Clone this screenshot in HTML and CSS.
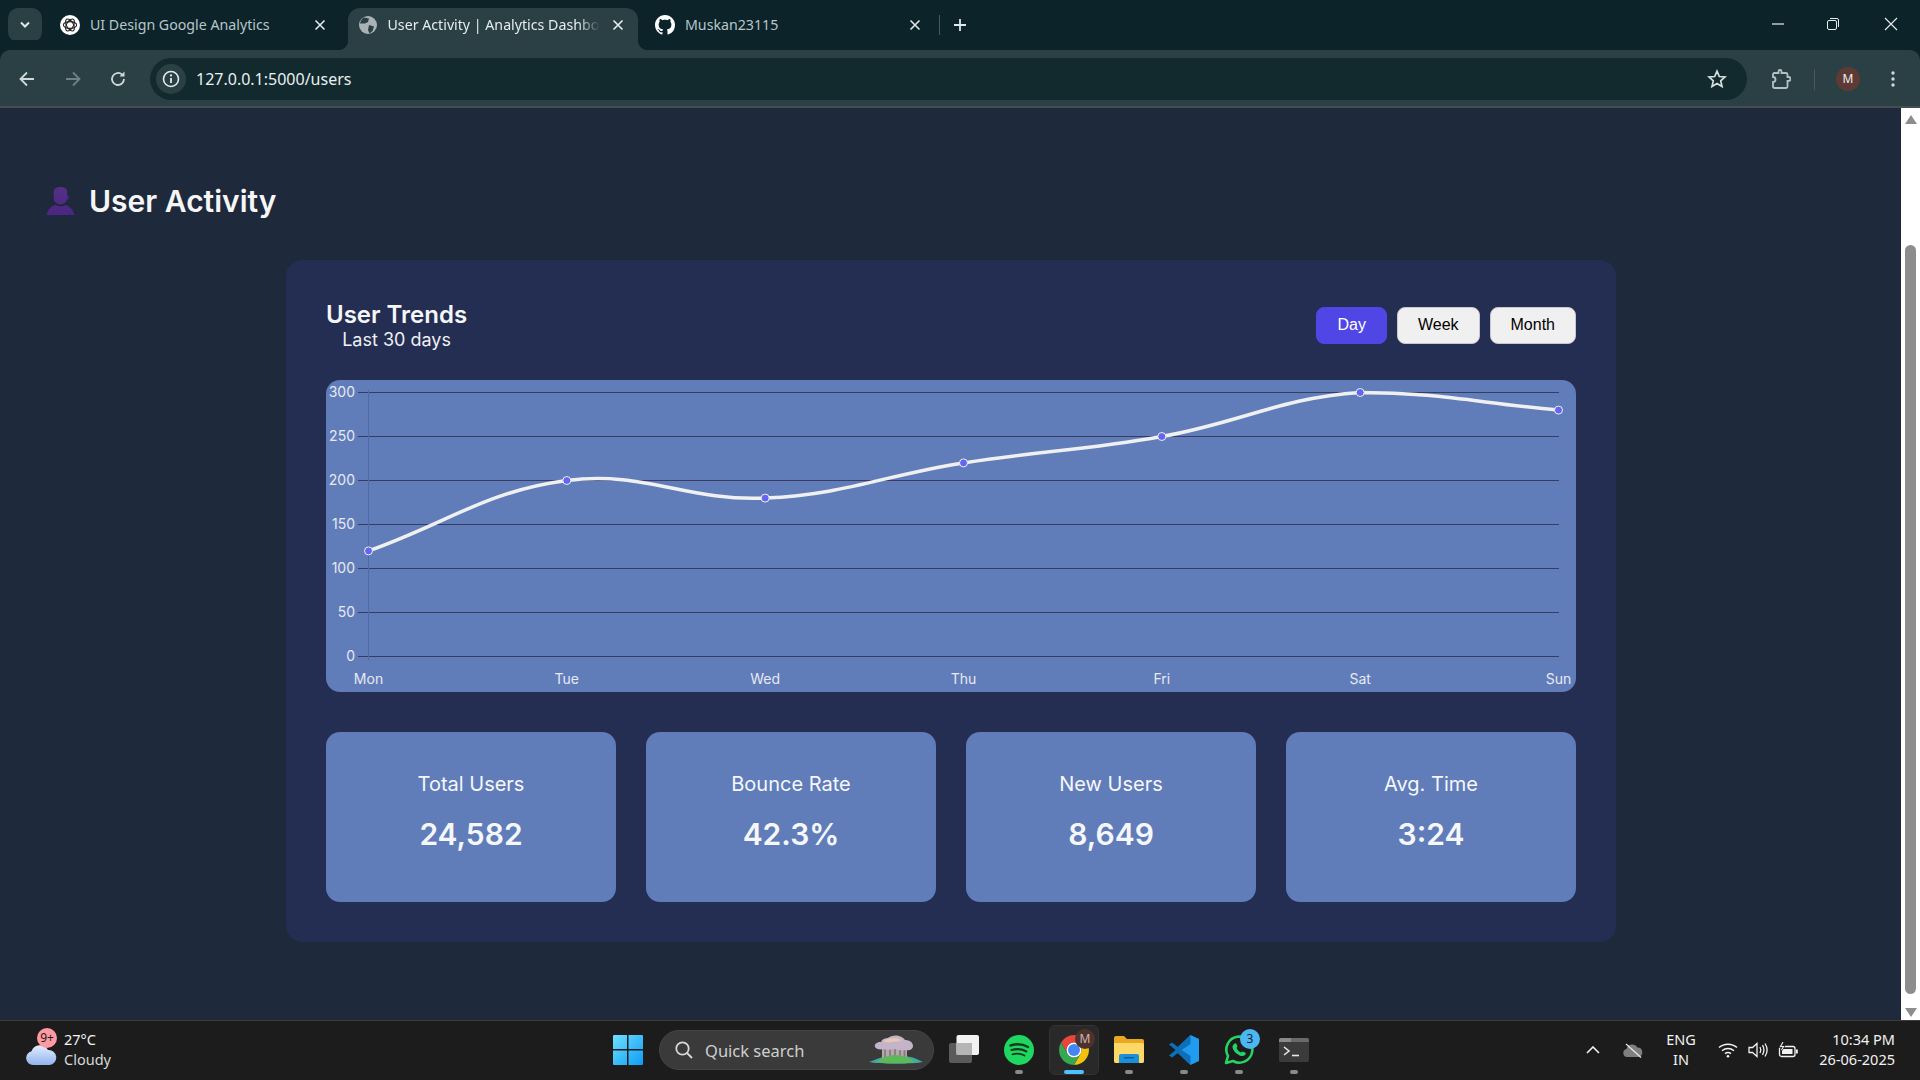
FILE: index.html
```html
<!DOCTYPE html>
<html lang="en">
<head>
<meta charset="utf-8">
<title>User Activity | Analytics Dashboard</title>
<link rel="stylesheet" href="styles.css">
</head>
<body>
<header class="tabstrip">
  <button class="tab-menu"><svg width="12" height="8" viewBox="0 0 12 8"><path d="M2 1.5l4 4 4-4" fill="none" stroke="#dfe7e8" stroke-width="2"/></svg></button>
  <div class="tab">
    <svg class="favicon" viewBox="0 0 20 20"><circle cx="10" cy="10" r="10" fill="#fff"/><g fill="none" stroke="#222" stroke-width="1.1"><ellipse cx="10" cy="10" rx="6.6" ry="3.4"/><ellipse cx="10" cy="10" rx="6.6" ry="3.4" transform="rotate(60 10 10)"/><ellipse cx="10" cy="10" rx="6.6" ry="3.4" transform="rotate(120 10 10)"/></g></svg>
    <span class="tab-title">UI Design Google Analytics</span>
    <svg class="tab-close" viewBox="0 0 12 12"><path d="M1.5 1.5l9 9M10.5 1.5l-9 9" stroke="#dfe7e8" stroke-width="1.6"/></svg>
  </div>
  <div class="tab tab-active">
    <svg class="favicon" viewBox="0 0 20 20"><circle cx="10" cy="10" r="9" fill="#a9b3b6"/><path d="M6 2.5l5 1-1 3.5-3 1.5L2 8.500c.5-2.500 2-4.800 4-6zM11 10l5 1.500-1.500 4.500-3 2.500-1.500-3.500z" fill="#2a4045"/></svg>
    <span class="tab-title tab-title-fade">User Activity | Analytics Dashboard</span>
    <svg class="tab-close" viewBox="0 0 12 12"><path d="M1.500 1.500l9 9M10.500 1.500l-9 9" stroke="#e8eeee" stroke-width="1.600"/></svg>
  </div>
  <div class="tab">
    <svg class="favicon" viewBox="0 0 16 16"><path fill="#fff" d="M8 0C3.58 0 0 3.58 0 8c0 3.540 2.290 6.530 5.470 7.590.4.070.55-.17.55-.38 0-.19-.01-.82-.01-1.490-2.010.37-2.530-.49-2.690-.94-.09-.23-.48-.94-.82-1.130-.28-.15-.68-.52-.01-.53.63-.01 1.080.58 1.230.82.72 1.210 1.870.87 2.330.66.07-.52.28-.87.51-1.070-1.780-.2-3.640-.89-3.640-3.950 0-.87.31-1.590.82-2.150-.08-.2-.36-1.020.08-2.120 0 0 .67-.21 2.200.82.64-.18 1.320-.27 2-.27.68 0 1.360.09 2 .27 1.530-1.040 2.200-.82 2.200-.82.44 1.100.16 1.920.08 2.120.51.56.82 1.270.82 2.150 0 3.070-1.870 3.750-3.650 3.950.29.25.54.73.54 1.480 0 1.070-.01 1.930-.01 2.200 0 .21.15.46.55.38A8.013 8.013 0 0016 8c0-4.420-3.580-8-8-8z"/></svg>
    <span class="tab-title">Muskan23115</span>
    <svg class="tab-close" viewBox="0 0 12 12"><path d="M1.500 1.500l9 9M10.500 1.500l-9 9" stroke="#dfe7e8" stroke-width="1.600"/></svg>
  </div>
  <span class="tab-sep"></span>
  <svg class="tab-new" viewBox="0 0 14 14"><path d="M7 1v12M1 7h12" stroke="#dfe7e8" stroke-width="1.800"/></svg>
  <div class="window-controls">
    <svg viewBox="0 0 14 14"><path d="M1 7h12" stroke="#e8eeee" stroke-width="1.200"/></svg>
    <svg viewBox="0 0 14 14"><rect x="1.500" y="3.500" width="9" height="9" rx="1.500" fill="none" stroke="#e8eeee"/><path d="M4 1.500h7a1.500 1.500 0 0 1 1.500 1.500v7" fill="none" stroke="#e8eeee"/></svg>
    <svg viewBox="0 0 14 14"><path d="M1 1l12 12M13 1L1 13" stroke="#e8eeee" stroke-width="1.100"/></svg>
  </div>
</header>

<nav class="toolbar">
  <svg class="tool tool-back" viewBox="0 0 18 18"><path d="M16 9H3M9 2.500L2.500 9 9 15.500" fill="none" stroke="#cfd9db" stroke-width="1.800"/></svg>
  <svg class="tool tool-forward" viewBox="0 0 18 18"><path d="M2 9h13M9 2.500L15.500 9 9 15.500" fill="none" stroke="#6f8286" stroke-width="1.800"/></svg>
  <svg class="tool tool-reload" viewBox="0 0 18 18"><path d="M15 9a6 6 0 1 1-1.900-4.400" fill="none" stroke="#cfd9db" stroke-width="1.800"/><path d="M15.500 1.500v5h-5z" fill="#cfd9db"/></svg>
  <div class="omnibox">
    <span class="site-info"><svg width="20" height="20" viewBox="0 0 20 20"><circle cx="10" cy="10" r="7.500" fill="none" stroke="#e3ebec" stroke-width="1.600"/><path d="M10 9v5" stroke="#e3ebec" stroke-width="1.800"/><circle cx="10" cy="6.400" r="1.100" fill="#e3ebec"/></svg></span>
    <span class="url">127.0.0.1:5000/users</span>
    <svg class="star" viewBox="0 0 20 20"><path d="M10 2.200l2.300 5.300 5.700.5-4.300 3.800 1.300 5.600-5-3-5 3 1.300-5.600L2 8l5.700-.5z" fill="none" stroke="#d5dfe0" stroke-width="1.700"/></svg>
  </div>
  <svg class="tool-ext" viewBox="0 0 20 22"><path d="M3 5h4.500V3.500a1.500 1.500 0 0 1 3 0V5H15a1.500 1.500 0 0 1 1.500 1.500V9h1a2 2 0 0 1 0 4h-1v5.500A1.500 1.500 0 0 1 15 20H3.500A1.500 1.500 0 0 1 2 18.500V14a2.500 2.500 0 0 0 0-5V6z" fill="none" stroke="#b3c1c4" stroke-width="1.800"/></svg>
  <span class="tool-sep"></span>
  <span class="avatar">M</span>
  <svg class="tool-menu" viewBox="0 0 4 18"><circle cx="2" cy="3" r="1.700" fill="#cfd9db"/><circle cx="2" cy="9" r="1.700" fill="#cfd9db"/><circle cx="2" cy="15" r="1.700" fill="#cfd9db"/></svg>
</nav>

<div class="viewport">
  <main class="page">
    <h1 class="page-title">
      <svg class="title-icon" viewBox="0 0 30 30"><defs><linearGradient id="pu" x1="0" y1="0" x2="0" y2="1"><stop offset="0" stop-color="#553085"/><stop offset="1" stop-color="#4a2683"/></linearGradient></defs><path d="M8 5c0-3 3-5 7-5s7 2 7 5v7c0 3-3 6-7 6s-7-3-7-6zM10 18.500c3 2 7 2 10 0 5 1 8 5 9.500 10.500H.500C2 23.500 5 19.500 10 18.500z" fill="url(#pu)"/><rect x="21.500" y="9" width="2" height="4" rx="1" fill="#4a2683"/></svg>
      User Activity
    </h1>
    <section class="panel">
      <div class="panel-head">
        <div class="panel-titles">
          <h2>User Trends</h2>
          <p>Last 30 days</p>
        </div>
        <div class="range">
          <button class="range-btn range-btn-on">Day</button>
          <button class="range-btn">Week</button>
          <button class="range-btn">Month</button>
        </div>
      </div>
      <div class="chart">
        <svg width="1250" height="312" viewBox="0 0 1250 312">
          <g class="grid">
            <line x1="32" x2="1233" y1="12.5" y2="12.5"/>
            <line x1="32" x2="1233" y1="56.5" y2="56.5"/>
            <line x1="32" x2="1233" y1="100.5" y2="100.5"/>
            <line x1="32" x2="1233" y1="144.5" y2="144.5"/>
            <line x1="32" x2="1233" y1="188.5" y2="188.5"/>
            <line x1="32" x2="1233" y1="232.5" y2="232.5"/>
            <line x1="32" x2="1233" y1="276.5" y2="276.5"/>
          </g>
          <line class="axis" x1="42.5" x2="42.5" y1="10" y2="280"/>
          <g class="y-labels">
            <text x="29" y="17">300</text>
            <text x="29" y="61">250</text>
            <text x="29" y="105">200</text>
            <text x="29" y="149">150</text>
            <text x="29" y="193">100</text>
            <text x="29" y="237">50</text>
            <text x="29" y="281">0</text>
          </g>
          <g class="x-labels">
            <text x="42.5" y="304">Mon</text>
            <text x="240.8" y="304">Tue</text>
            <text x="439.2" y="304">Wed</text>
            <text x="637.5" y="304">Thu</text>
            <text x="835.8" y="304">Fri</text>
            <text x="1034.2" y="304">Sat</text>
            <text x="1232.5" y="304">Sun</text>
          </g>
          <path class="trend" d="M42.5 170.9C121.83 142.74 159.3 111.35 240.83 100.5C317.98 90.23 360.3 121.6 439.17 118.1C518.97 114.56 557.9 95.26 637.5 82.9C716.56 70.62 757.1 70.47 835.83 56.5C915.76 42.31 954.04 17.83 1034.17 12.5C1112.71 12.5 1153.17 23.06 1232.5 30.1"/>
          <g class="points">
            <circle cx="42.5" cy="170.9" r="4"/>
            <circle cx="240.83" cy="100.5" r="4"/>
            <circle cx="439.17" cy="118.1" r="4"/>
            <circle cx="637.5" cy="82.9" r="4"/>
            <circle cx="835.83" cy="56.5" r="4"/>
            <circle cx="1034.17" cy="12.5" r="4"/>
            <circle cx="1232.5" cy="30.1" r="4"/>
          </g>
        </svg>
      </div>
      <div class="stats">
        <div class="stat"><span class="stat-label">Total Users</span><strong class="stat-value">24,582</strong></div>
        <div class="stat"><span class="stat-label">Bounce Rate</span><strong class="stat-value">42.3%</strong></div>
        <div class="stat"><span class="stat-label">New Users</span><strong class="stat-value">8,649</strong></div>
        <div class="stat"><span class="stat-label">Avg. Time</span><strong class="stat-value">3:24</strong></div>
      </div>
    </section>
  </main>
  <aside class="scrollbar">
    <span class="arrow-up"></span>
    <span class="thumb"></span>
    <span class="arrow-down"></span>
  </aside>
</div>

<footer class="taskbar">
  <div class="weather">
    <span class="weather-icon">
      <svg width="32" height="24" viewBox="0 0 32 24"><defs><linearGradient id="cl" x1="0" y1="0" x2="0" y2="1"><stop offset="0" stop-color="#e6eefc"/><stop offset="1" stop-color="#8fb2ee"/></linearGradient></defs><path d="M8 23a7 7 0 0 1-1.500-13.800A9 9 0 0 1 23 8a7.500 7.500 0 0 1 1.500 15z" fill="url(#cl)"/></svg>
      <span class="weather-badge">9+</span>
    </span>
    <span class="weather-text"><span class="weather-temp">27°C</span><span>Cloudy</span></span>
  </div>
  <svg class="start" viewBox="0 0 30 30"><defs><linearGradient id="wn" x1="0" y1="0" x2="1" y2="1"><stop offset="0" stop-color="#6fe0ff"/><stop offset="1" stop-color="#0d9cf5"/></linearGradient></defs><path d="M0 1a1 1 0 0 1 1-1h13v14H0zM15.500 0H29a1 1 0 0 1 1 1v13H15.500zM0 15.500h14V30H1a1 1 0 0 1-1-1zM15.500 15.500H30V29a1 1 0 0 1-1 1H15.500z" fill="url(#wn)"/></svg>
  <div class="search">
    <svg class="search-icon" viewBox="0 0 18 18"><circle cx="7.500" cy="7.500" r="6.200" fill="none" stroke="#d8d8d8" stroke-width="1.800"/><path d="M12 12l5 5" stroke="#d8d8d8" stroke-width="1.800"/></svg>
    <span class="search-text">Quick search</span>
    <svg class="search-art" viewBox="0 0 54 30">
      <path d="M0 27c8-3 12-5 20-6h16c8 1 12 3 18 6-8 2-46 2-54 0z" fill="#3fa8a8"/>
      <rect x="13" y="12" width="25" height="11" fill="#b5a8a6"/>
      <path d="M16 12v11M21 12v11M26 12v11M31 12v11M35.500 12v11" stroke="#857a84" stroke-width="1.700"/>
      <path d="M8 27c5-5 12-7 20-7 8 1 13 3 18 7-12 2-26 2-38 0z" fill="#5db85a"/>
      <path d="M6 12c-1-3 2-5 6-5 1-3 4-4 7-4 2-2 7-3 11-2 3 1 5 2 6 4 4 0 8 2 8 6 0 3-3 5-7 4-4 1-8 0-11-1-4 1-9 1-12 0-3 1-7 0-8-2z" fill="#c3b4ca"/>
      <path d="M14 6c3-3 13-4 19-1-2 2-6 1-9 2-3 0-7 1-10-1z" fill="#e6c9b0"/>
    </svg>
  </div>
  <div class="apps">
    <span class="app"><svg class="app-icon" viewBox="0 0 30 30"><rect x="0" y="8" width="23" height="20" rx="2" fill="#5a5a5a"/><rect x="7.500" y="0" width="22.500" height="20" rx="2" fill="#f2f2f2"/><rect x="7.500" y="8" width="15.500" height="12" fill="#b5b5b5"/></svg></span>
    <span class="app app-open"><svg class="app-icon" viewBox="0 0 30 30"><circle cx="15" cy="15" r="15" fill="#1ed760"/><g fill="none" stroke="#15391f" stroke-linecap="round"><path d="M6.500 10.500c6-1.800 12.500-1.300 17.500 1.500" stroke-width="2.500"/><path d="M7.500 15c5-1.400 10.500-1 14.800 1.400" stroke-width="2.200"/><path d="M8.500 19.300c4.300-1 8.500-.7 12 1.200" stroke-width="1.800"/></g></svg></span>
    <span class="app app-active"><svg class="app-icon" viewBox="0 0 30 30"><path d="M27.990 7.500A15 15 0 0 0 2.010 7.500L8.500 18.750A7.500 7.500 0 0 1 15 7.500z" fill="#e8453c"/><path d="M27.990 7.500A15 15 0 0 1 15 30L21.500 18.750A7.500 7.500 0 0 0 15 7.500z" fill="#f4c20d"/><path d="M2.010 7.500A15 15 0 0 0 15 30L21.500 18.750A7.500 7.500 0 0 1 8.500 18.750z" fill="#34a853"/><circle cx="15" cy="15" r="7.500" fill="#fff"/><circle cx="15" cy="15" r="6" fill="#4285f4"/></svg><span class="app-badge app-badge-m">M</span></span>
    <span class="app app-open"><svg class="app-icon" viewBox="0 0 30 30"><path d="M0 3a2 2 0 0 1 2-2h8l3 3h15a2 2 0 0 1 2 2v20a2 2 0 0 1-2 2H2a2 2 0 0 1-2-2z" fill="#e9a820"/><path d="M0 8h28a2 2 0 0 1 2 2v16a2 2 0 0 1-2 2H2a2 2 0 0 1-2-2z" fill="#fcd868"/><path d="M5 21a2 2 0 0 1 2-2h16a2 2 0 0 1 2 2v7H5z" fill="#1b8fd8"/><rect x="10" y="22" width="10" height="1.500" fill="#0c5f9e"/></svg></span>
    <span class="app app-open"><svg class="app-icon" viewBox="0 0 30 30"><path d="M21.500 0L30 4v22l-8.500 4L9 18V12z" fill="#1f9cf0"/><path d="M21.500 0L9 12 3 7.500 0 9.500 6.500 15 0 20.500l3 2L9 18l12.500 12V21L12.500 15 21.500 9z" fill="#0c6fb8"/></svg></span>
    <span class="app app-open"><svg class="app-icon" viewBox="0 0 30 30"><path d="M2 28l2-7A13 13 0 1 1 9 26z" fill="none" stroke="#25d366" stroke-width="2.600" stroke-linejoin="round"/><path d="M10 9c1-1 2-1 2.500 0l1 2.500-1 1.500c1 2 2.500 3.500 4.500 4.500l1.500-1 2.500 1c1 .5 1 1.500 0 2.500-1.500 1.500-4 1.500-7-.5s-5-4.500-5.500-7c-.2-1.200.5-2.500 1.500-3.500z" fill="#25d366"/></svg><span class="app-badge app-badge-n">3</span></span>
    <span class="app app-open"><svg class="app-icon app-term" viewBox="0 0 30 24"><rect width="30" height="24" rx="2" fill="#3b3b3b"/><path d="M0 2a2 2 0 0 1 2-2h10v4H0z" fill="#8a8a8a"/><path d="M12 0h16a2 2 0 0 1 2 2v2H12z" fill="#6a6a6a"/><path d="M5 9l5 4-5 4" fill="none" stroke="#e8e8e8" stroke-width="1.600"/><path d="M13 17.500h7" stroke="#e8e8e8" stroke-width="1.600"/></svg></span>
  </div>
  <div class="tray">
    <svg class="tray-chevron" viewBox="0 0 14 8"><path d="M1 7l6-6 6 6" fill="none" stroke="#f2f2f2" stroke-width="1.600"/></svg>
    <svg class="tray-cloud" viewBox="0 0 20 15"><path d="M4 14a4 4 0 0 1-.5-7.900A6 6 0 0 1 14.500 4.500 4.800 4.800 0 0 1 15.500 14z" fill="#7f7f7f"/><path d="M3 1l15 13.500" stroke="#e6e6e6" stroke-width="1.300"/></svg>
    <span class="tray-lang"><span>ENG</span><span>IN</span></span>
    <svg class="tray-wifi" viewBox="0 0 20 16"><g fill="none" stroke="#f2f2f2" stroke-width="1.500"><path d="M1 5.500c5-4.500 13-4.500 18 0"/><path d="M4 8.700c3.500-3 8.500-3 12 0"/><path d="M7 11.700c1.800-1.500 4.200-1.500 6 0"/></g><circle cx="10" cy="14.300" r="1.300" fill="#f2f2f2"/></svg>
    <svg class="tray-vol" viewBox="0 0 20 16"><path d="M1 5.500h3.500L9 1.500v13l-4.500-4H1z" fill="none" stroke="#f2f2f2" stroke-width="1.300"/><g fill="none" stroke="#f2f2f2" stroke-width="1.300"><path d="M12 5c1 1.800 1 4.200 0 6"/><path d="M14.500 3.200c1.800 3 1.800 6.600 0 9.600"/><path d="M17 1.500c2.600 4 2.600 9 0 13"/></g></svg>
    <svg class="tray-bat" viewBox="0 0 20 16"><rect x="1.500" y="4.500" width="15.500" height="10" rx="2" fill="none" stroke="#f2f2f2" stroke-width="1.300"/><rect x="4" y="7" width="10.500" height="5" fill="#f2f2f2"/><rect x="18" y="7.500" width="1.800" height="4" fill="#f2f2f2"/><path d="M5 0L2.500 4.500h3L3.500 8" fill="none" stroke="#1c1c1c" stroke-width="2.500"/><path d="M5 0L2.500 4.500h3L3.500 8" fill="none" stroke="#f2f2f2" stroke-width="1.100"/></svg>
    <span class="tray-clock"><span>10:34 PM</span><span>26-06-2025</span></span>
  </div>
</footer>
</body>
</html>
```
FILE: styles.css
```css
* { box-sizing: border-box; }
html, body { margin: 0; height: 100%; }
body {
  width: 1920px;
  height: 1080px;
  overflow: hidden;
  display: flex;
  flex-direction: column;
  font-family: Inter, "Liberation Sans", sans-serif;
  background: #1e293b;
}

/* browser tabs */
.tabstrip {
  height: 50px;
  flex: none;
  display: flex;
  align-items: flex-start;
  background: #0b2329;
  font-family: "Noto Sans", "Open Sans", sans-serif;
  font-size: 14.2px;
  color: #b9c6c9;
}
.tab-menu {
  width: 34px;
  height: 34px;
  margin: 8px 8px 0 8px;
  padding: 0;
  border: 0;
  border-radius: 10px;
  background: #2a4045;
  display: flex;
  align-items: center;
  justify-content: center;
}
.tab {
  position: relative;
  width: 290px;
  height: 42px;
  margin-top: 8px;
  margin-right: 7.5px;
  padding: 0 12px 9px 10px;
  display: flex;
  align-items: center;
  border-radius: 12px 12px 0 0;
}
.tab-active { background: #2a4045; color: #e4ecee; }
.tab-active::before, .tab-active::after {
  content: "";
  position: absolute;
  bottom: 0;
  width: 10px;
  height: 10px;
}
.tab-active::before { left: -10px; background: radial-gradient(circle at 0 0, transparent 10px, #2a4045 10.5px); }
.tab-active::after { right: -10px; background: radial-gradient(circle at 100% 0, transparent 10px, #2a4045 10.5px); }
.favicon { width: 20px; height: 20px; flex: none; }
.tab-title { flex: 1; margin-left: 10px; white-space: nowrap; overflow: hidden; }
.tab-title-fade { -webkit-mask-image: linear-gradient(90deg, #000 88%, transparent 98%); mask-image: linear-gradient(90deg, #000 88%, transparent 98%); }
.tab-close { width: 12px; height: 12px; flex: none; margin-left: 8px; margin-right: 2px; }
.tab-sep { width: 1px; height: 20px; margin: 15px 0 0 -3.5px; background: #45585c; }
.tab-new { width: 14px; height: 14px; margin: 18px 0 0 13px; }
.window-controls {
  margin-left: auto;
  display: flex;
  gap: 44px;
  padding: 17px 22px 0 0;
}
.window-controls svg { width: 14px; height: 14px; }
.window-controls svg:first-child { margin-right: -3px; }

/* browser toolbar */
.toolbar {
  height: 58px;
  flex: none;
  display: flex;
  align-items: center;
  padding-top: 2px;
  background: #2a4045;
  border-bottom: 2px solid #454d50;
  border-radius: 10px 10px 0 0;
  box-shadow: 0 -10px 0 0 #0b2329;
}
.tool { width: 18px; height: 18px; flex: none; }
.tool-back { margin-left: 18px; }
.tool-forward { margin-left: 28px; }
.tool-reload { margin-left: 27px; }
.omnibox {
  width: 1597px;
  height: 42px;
  margin-left: 23px;
  padding: 0 20px 0 6px;
  display: flex;
  align-items: center;
  border-radius: 21px;
  background: #12292e;
}
.site-info {
  width: 30px;
  height: 30px;
  display: flex;
  align-items: center;
  justify-content: center;
  border-radius: 50%;
  background: #2a4045;
}
.url {
  margin-left: 10px;
  font-family: "Noto Sans", "Open Sans", sans-serif;
  font-size: 16px;
  color: #e8f0f1;
}
.star { width: 20px; height: 20px; margin-left: auto; }
.tool-ext { width: 20px; height: 22px; margin-left: 24px; }
.tool-sep { width: 1px; height: 21px; margin-left: 23px; background: #45585c; }
.avatar {
  width: 24px;
  height: 24px;
  margin-left: 21px;
  border-radius: 50%;
  background: #5d3a34;
  color: #eee;
  font-family: "Noto Sans", sans-serif;
  font-size: 12px;
  line-height: 24px;
  text-align: center;
}
.tool-menu { width: 4px; height: 18px; margin-left: 31px; }

/* page */
.viewport { flex: 1; min-height: 0; display: flex; }
.page { flex: 1; min-width: 0; background: #1e293b; color: #f5f6f8; }
.page-title {
  height: 50px;
  margin: 68px 0 34px 46px;
  display: flex;
  align-items: center;
  gap: 14px;
  font-size: 30px;
  font-weight: 600;
  line-height: 50px;
}
.title-icon { width: 29px; height: 29px; flex: none; }
.panel {
  width: 1330px;
  height: 682px;
  margin-left: 286px;
  padding: 40px;
  border-radius: 16px;
  background: #242d52;
}
.panel-head {
  height: 51px;
  margin-bottom: 29px;
  display: flex;
  align-items: center;
  justify-content: space-between;
}
.panel-titles { text-align: center; }
.panel-titles h2 { margin: 0; font-size: 24px; font-weight: 600; line-height: 29px; }
.panel-titles p { margin: 0; font-size: 18px; line-height: 22px; color: #eef0f4; }
.range { display: flex; gap: 10px; margin-top: -1px; }
.range-btn {
  height: 37px;
  padding: 0 20px;
  border: 1px solid #c8c8ce;
  border-radius: 8px;
  background: #f0f0f0;
  color: #000;
  font-family: "Liberation Sans", Arial, sans-serif;
  font-size: 16px;
}
.range-btn-on { background: #4f46e5; border-color: #4f46e5; color: #fff; }

.chart { height: 312px; border-radius: 14px; background: #607dba; overflow: hidden; }
.chart svg { display: block; }
.grid line { stroke: #383b62; stroke-width: 1; }
.axis { stroke: #506ba3; stroke-width: 1; }
.y-labels text, .x-labels text { font-family: Inter, sans-serif; font-size: 14px; fill: #e7e9f2; }
.y-labels text { text-anchor: end; }
.x-labels text { text-anchor: middle; }
.trend { fill: none; stroke: #f0f0f0; stroke-width: 3.5; }
.points circle { fill: #6366f1; stroke: #f0f0f0; stroke-width: 1; }

.stats { margin-top: 40px; display: grid; grid-template-columns: repeat(4, 1fr); gap: 30px; }
.stat {
  height: 170px;
  padding-top: 40px;
  display: flex;
  flex-direction: column;
  align-items: center;
  border-radius: 14px;
  background: #607dba;
}
.stat-label { font-size: 20px; line-height: 24px; color: #f6f7fa; }
.stat-value { margin-top: 20px; font-size: 30px; font-weight: 600; line-height: 36px; color: #f6f7fa; }

/* scrollbar */
.scrollbar {
  width: 19px;
  flex: none;
  display: flex;
  flex-direction: column;
  align-items: center;
  background: #fff;
  padding-top: 7px;
}
.arrow-up, .arrow-down { width: 0; height: 0; border-left: 6px solid transparent; border-right: 6px solid transparent; }
.arrow-up { border-bottom: 9px solid #8d8d8d; }
.arrow-down { border-top: 9px solid #8d8d8d; margin-top: 14px; }
.thumb { width: 11px; height: 749px; margin-top: 121px; border-radius: 6px; background: #8d8d8d; }

/* taskbar */
.taskbar {
  height: 60px;
  flex: none;
  position: relative;
  display: flex;
  align-items: center;
  padding-bottom: 1px;
  border-top: 1px solid #3c3c3c;
  background: #1c1c1c;
  font-family: "Noto Sans", "Open Sans", sans-serif;
  font-size: 14.5px;
  color: #f2f2f2;
}
.weather { width: 613px; padding-left: 25px; display: flex; align-items: center; }
.weather-icon { position: relative; width: 32px; height: 24px; margin-top: 8px; }
.weather-badge {
  position: absolute;
  left: 12px;
  top: -14px;
  width: 20px;
  height: 20px;
  border-radius: 50%;
  background: #ff9aa2;
  color: #1a1a1a;
  font-size: 12px;
  line-height: 20px;
  text-align: center;
}
.weather-text { margin: -2px 0 0 7px; display: flex; flex-direction: column; line-height: 20px; color: #d8d8d8; }
.weather-temp { color: #f2f2f2; }
.start { width: 30px; height: 30px; flex: none; }
.search {
  width: 275px;
  height: 40px;
  margin-left: 16px;
  padding: 0 10px 0 15px;
  flex: none;
  display: flex;
  align-items: center;
  border-radius: 20px;
  border: 1px solid #454545;
  background: #3a3a3a;
}
.search-icon { width: 18px; height: 18px; flex: none; }
.search-text { margin-left: 12px; font-size: 16.5px; color: #cfcfcf; }
.search-art { width: 54px; height: 30px; margin-left: auto; }
.apps { margin-left: 5px; display: flex; gap: 5px; }
.app {
  position: relative;
  width: 50px;
  height: 50px;
  display: flex;
  align-items: center;
  justify-content: center;
  border: 1px solid transparent;
  border-radius: 6px;
}
.app-icon { width: 30px; height: 30px; }
.app-term { height: 24px; }
.app-open::after, .app-active::after {
  content: "";
  position: absolute;
  left: 50%;
  bottom: 0;
  width: 8px;
  height: 4px;
  margin-left: -4px;
  border-radius: 2px;
  background: #8a8a8a;
}
.app-active { background: #292929; border-color: #333; }
.app-active::after { width: 20px; margin-left: -10px; background: #4cc2ff; }
.app-badge {
  position: absolute;
  right: 3px;
  top: 3px;
  width: 20px;
  height: 20px;
  border-radius: 50%;
  font-size: 12px;
  line-height: 20px;
  text-align: center;
}
.app-badge-m { background: #4e332d; color: #cbb9b4; }
.app-badge-n { background: #4cb6f2; color: #10222e; }
.tray { margin-left: auto; padding-right: 25px; display: flex; align-items: center; }
.tray-chevron { width: 14px; height: 8px; }
.tray-cloud { width: 20px; height: 15px; margin-left: 23px; }
.tray-lang { width: 30px; margin: -2px 0 0 23px; display: flex; flex-direction: column; align-items: center; line-height: 20px; }
.tray-wifi, .tray-vol, .tray-bat { width: 20px; height: 16px; margin-left: 10px; }
.tray-wifi { margin-left: 22px; }
.tray-clock { width: 90px; margin: -2px 0 0 7px; display: flex; flex-direction: column; align-items: flex-end; line-height: 20px; }
```
